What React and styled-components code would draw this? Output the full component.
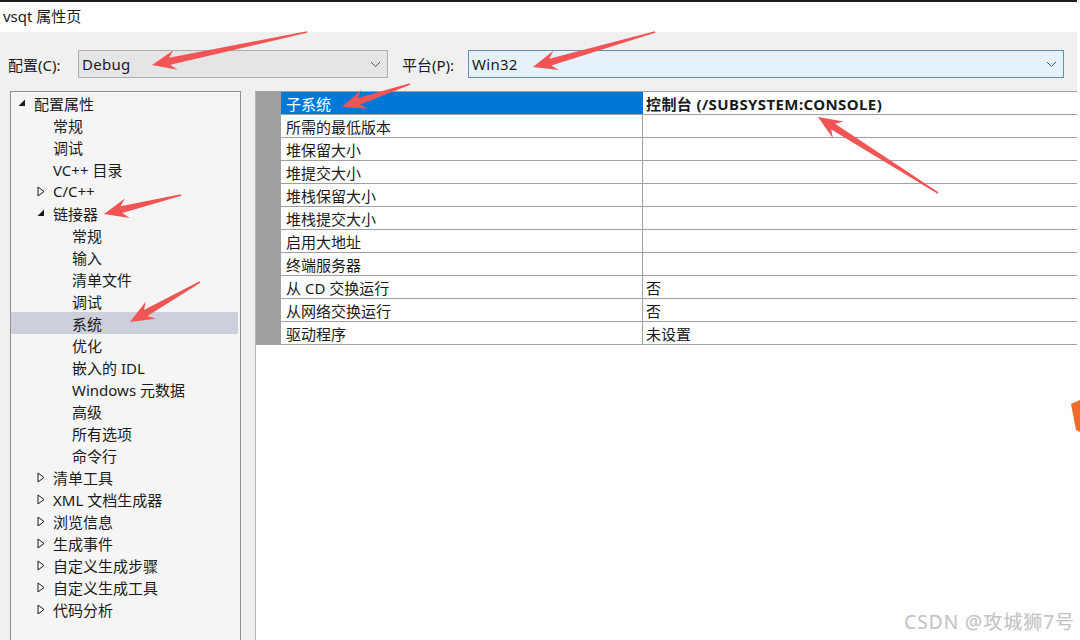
import React from 'react';
import styled, { createGlobalStyle } from 'styled-components';

const PageGlobal = createGlobalStyle`
* {
    box-sizing:border-box;
}
body {
    margin:0;
    background-color:#ffffff;
    font-family:"Noto Sans", "Noto Sans CJK SC", "Liberation Sans", sans-serif;
    font-size:15px;
    color:#1a1a1a;
    overflow:hidden;
}
`

const Page = styled.div`
    position:relative;
    width:1080px;
    height:640px;
    overflow:hidden;
`

const Window = styled.div`
    display:flex;
    flex-direction:column;
    width:1077px;
    height:640px;
    border-top:2px solid #1e1e1e;
`

const TitleBar = styled.div`
    height:30px;
    padding-left:3px;
    display:flex;
    align-items:center;
    background-color:#ffffff;
    font-size:15px;
    padding-bottom:4px;
`

const Body = styled.div`
    flex:1;
    display:flex;
    flex-direction:column;
    background-color:#f0f0f0;
    min-height:0;
`

const ConfigRow = styled.div`
    display:flex;
    align-items:center;
    height:28px;
    margin-top:18px;
    margin-bottom:13px;
    padding-left:8px;
`

const FieldLabel = styled.label`
    width:${p => p.$width}px;
    font-size:15px;
    white-space:nowrap;
`

const Select = styled.div`
    display:flex;
    align-items:center;
    justify-content:space-between;
    width:${p => p.$width}px;
    height:28px;
    padding:0 6px 0 3px;
    font-size:15px;
    letter-spacing:0.3px;
    background-color:${p => p.$focused ? '#e5f1fb' : '#e5e5e5'};
    border:1px solid ${p => p.$focused ? '#6b8db3' : '#adadad'};
`

const Gap = styled.div`
    width:${p => p.$width}px;
`

const Content = styled.div`
    flex:1;
    display:flex;
    padding-left:10px;
    min-height:0;
`

const TreePanel = styled.div`
    width:231px;
    background-color:#f5f5f5;
    border:1px solid #8f8f8f;
    border-bottom:none;
`

const TreeRow = styled.div`
    position:relative;
    display:flex;
    align-items:center;
    height:22px;
    margin-right:2px;
    padding-left:${p => p.$indent}px;
    background-color:${p => p.$selected ? '#cdcfdb' : 'transparent'};
    white-space:nowrap;
`

const Toggle = styled.span`
    display:inline-flex;
    align-items:center;
    width:16px;
    height:22px;
`

const PropertyGrid = styled.div`
    flex:1;
    margin-left:14px;
    background-color:#ffffff;
    border-top:1px solid #a0a0a0;
    border-left:1px solid #b4b4b4;
`

const GridRow = styled.div`
    display:grid;
    grid-template-columns:25px 362px 1fr;
    height:23px;
    border-bottom:1px solid #a0a0a0;
`

const Gutter = styled.div`
    background-color:#a0a0a0;
`

const NameCell = styled.div`
    display:flex;
    align-items:center;
    padding-left:5px;
    border-right:1px solid ${p => p.$selected ? '#0078d7' : '#a0a0a0'};
    background-color:${p => p.$selected ? '#0078d7' : '#ffffff'};
    color:${p => p.$selected ? '#ffffff' : '#1a1a1a'};
    white-space:nowrap;
`

const ValueCell = styled.div`
    display:flex;
    align-items:center;
    padding-left:3px;
    font-weight:${p => p.$bold ? 700 : 400};
    letter-spacing:${p => p.$bold ? '0.4px' : '0'};
    white-space:nowrap;
`

const Overlay = styled.svg`
    position:absolute;
    left:0;
    top:0;
    pointer-events:none;
`

const Watermark = styled.div`
    position:absolute;
    right:5px;
    bottom:5px;
    font-size:19px;
    color:#c4c4c4;
    text-shadow:0 0 1px #e8e8e8;
    letter-spacing:1px;
`

const Chevron = () => (
    <svg width="11" height="7" viewBox="0 0 11 7">
        <path d="M1 1 L5.5 5.5 L10 1" fill="none" stroke="#555" strokeWidth="1" />
    </svg>
)

const Expanded = () => (
    <svg width="8" height="8" viewBox="0 0 8 8">
        <path d="M7 0.5 L7 7 L0.5 7 Z" fill="#1a1a1a" />
    </svg>
)

const Collapsed = () => (
    <svg width="8" height="11" viewBox="0 0 8 11">
        <path d="M1 1 L7 5.5 L1 10 Z" fill="none" stroke="#1a1a1a" strokeWidth="1" />
    </svg>
)

const indents = [7, 26, 45]

const tree = [
    { label: '配置属性', level: 0, state: 'open' },
    { label: '常规', level: 1 },
    { label: '调试', level: 1 },
    { label: 'VC++ 目录', level: 1 },
    { label: 'C/C++', level: 1, state: 'closed' },
    { label: '链接器', level: 1, state: 'open' },
    { label: '常规', level: 2 },
    { label: '输入', level: 2 },
    { label: '清单文件', level: 2 },
    { label: '调试', level: 2 },
    { label: '系统', level: 2, selected: true },
    { label: '优化', level: 2 },
    { label: '嵌入的 IDL', level: 2 },
    { label: 'Windows 元数据', level: 2 },
    { label: '高级', level: 2 },
    { label: '所有选项', level: 2 },
    { label: '命令行', level: 2 },
    { label: '清单工具', level: 1, state: 'closed' },
    { label: 'XML 文档生成器', level: 1, state: 'closed' },
    { label: '浏览信息', level: 1, state: 'closed' },
    { label: '生成事件', level: 1, state: 'closed' },
    { label: '自定义生成步骤', level: 1, state: 'closed' },
    { label: '自定义生成工具', level: 1, state: 'closed' },
    { label: '代码分析', level: 1, state: 'closed' },
]

const props = [
    { name: '子系统', value: '控制台 (/SUBSYSTEM:CONSOLE)', selected: true },
    { name: '所需的最低版本', value: '' },
    { name: '堆保留大小', value: '' },
    { name: '堆提交大小', value: '' },
    { name: '堆栈保留大小', value: '' },
    { name: '堆栈提交大小', value: '' },
    { name: '启用大地址', value: '' },
    { name: '终端服务器', value: '' },
    { name: '从 CD 交换运行', value: '否' },
    { name: '从网络交换运行', value: '否' },
    { name: '驱动程序', value: '未设置' },
]

// annotation arrows: tail -> tip
const arrows = [
    [307, 32, 152, 65],
    [655, 32, 533, 67],
    [410, 84, 342, 107],
    [181, 195, 104, 214],
    [200, 282, 130, 322],
    [938, 193, 818, 117],
]

const arrowPoints = ([x1, y1, x2, y2]) => {
    const dx = x2 - x1
    const dy = y2 - y1
    const len = Math.hypot(dx, dy)
    const ux = dx / len
    const uy = dy / len
    const nx = -uy
    const ny = ux
    const headLen = 24
    const headW = 10
    const bx = x2 - ux * headLen
    const by = y2 - uy * headLen
    const nb = x2 - ux * (headLen - 6)
    const nby = y2 - uy * (headLen - 6)
    const pts = [
        [x1 + nx * 0.8, y1 + ny * 0.8],
        [nb + nx * 3.5, nby + ny * 3.5],
        [bx + nx * headW, by + ny * headW],
        [x2, y2],
        [bx - nx * headW, by - ny * headW],
        [nb - nx * 3.5, nby - ny * 3.5],
        [x1 - nx * 0.8, y1 - ny * 0.8],
    ]
    return pts.map(p => p.map(v => v.toFixed(1)).join(',')).join(' ')
}

const App = () => {
    return(
        <>
        <PageGlobal/>
        <Page>
            <Window>
                <TitleBar>vsqt 属性页</TitleBar>
                <Body>
                    {/* configuration / platform */}
                    <ConfigRow>
                        <FieldLabel $width={70}>配置(C):</FieldLabel>
                        <Select $width={310}>
                            <span>Debug</span>
                            <Chevron/>
                        </Select>
                        <Gap $width={14}/>
                        <FieldLabel $width={66}>平台(P):</FieldLabel>
                        <Select $width={596} $focused>
                            <span>Win32</span>
                            <Chevron/>
                        </Select>
                    </ConfigRow>

                    <Content>
                        <TreePanel>
                            {tree.map((item, i) => (
                                <TreeRow key={i} $indent={indents[item.level]} $selected={item.selected}>
                                    {item.level < 2 && (
                                        <Toggle>
                                            {item.state === 'open' && <Expanded/>}
                                            {item.state === 'closed' && <Collapsed/>}
                                        </Toggle>
                                    )}
                                    {item.level === 2 && <Toggle/>}
                                    {item.label}
                                </TreeRow>
                            ))}
                        </TreePanel>

                        <PropertyGrid>
                            {props.map((p, i) => (
                                <GridRow key={i}>
                                    <Gutter/>
                                    <NameCell $selected={p.selected}>{p.name}</NameCell>
                                    <ValueCell $bold={p.selected}>{p.value}</ValueCell>
                                </GridRow>
                            ))}
                        </PropertyGrid>
                    </Content>
                </Body>
            </Window>

            <Overlay width="1080" height="640" viewBox="0 0 1080 640">
                {arrows.map((a, i) => (
                    <polygon key={i} points={arrowPoints(a)} fill="#f05454" />
                ))}
                <path d="M1071 404 L1080 400 L1080 432 L1076 430 Z" fill="#f26b2a" />
            </Overlay>

            <Watermark>CSDN @攻城狮7号</Watermark>
        </Page>
        </>
    )
}

export default App
